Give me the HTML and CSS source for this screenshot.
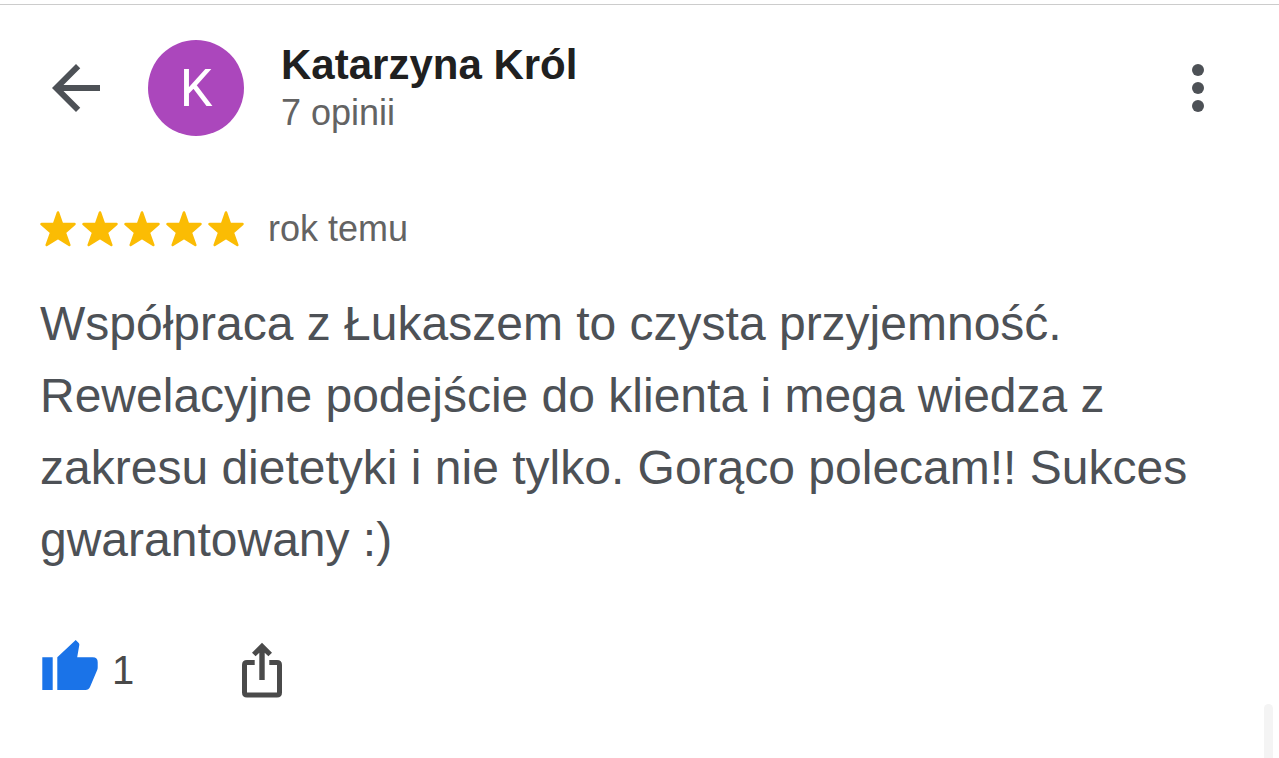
FILE: index.html
```html
<!DOCTYPE html>
<html lang="pl">
<head>
  <meta charset="UTF-8">
  <meta name="viewport" content="width=device-width, initial-scale=1.0">
  <title>Opinia - Katarzyna Król</title>
  <link rel="stylesheet" href="styles.css">
</head>
<body>
  <svg class="sprite" aria-hidden="true">
    <symbol id="star" viewBox="0 0 36 36">
      <path d="M18 1.500 22 13h12.500L24.800 21.500 29.300 34 18 27 6.700 34l4.500-12.500L1.500 13H14z" stroke-width="2.500" stroke-linejoin="round"/>
    </symbol>
  </svg>

  <article class="review">
    <header class="review-header">
      <button class="icon-btn back" type="button" aria-label="Wstecz">
        <svg width="48" height="48" viewBox="4 4 16 16" fill="#4d5156">
          <path d="M20 11H7.830l5.590-5.590L12 4l-8 8 8 8 1.410-1.410L7.830 13H20z"/>
        </svg>
      </button>
      <div class="avatar">K</div>
      <div class="author">
        <h1>Katarzyna Król</h1>
        <p>7 opinii</p>
      </div>
      <button class="icon-btn more" type="button" aria-label="Więcej">
        <svg width="12" height="48" viewBox="0 0 12 48" fill="#4d5156">
          <circle cx="6" cy="6" r="6"/>
          <circle cx="6" cy="24" r="6"/>
          <circle cx="6" cy="42" r="6"/>
        </svg>
      </button>
    </header>

    <div class="rating">
      <div class="stars" role="img" aria-label="5 z 5 gwiazdek">
        <svg><use href="#star"/></svg>
        <svg><use href="#star"/></svg>
        <svg><use href="#star"/></svg>
        <svg><use href="#star"/></svg>
        <svg><use href="#star"/></svg>
      </div>
      <span class="date">rok temu</span>
    </div>

    <p class="review-text">Współpraca z Łukaszem to czysta przyjemność. Rewelacyjne podejście do klienta i mega wiedza z zakresu dietetyki i nie tylko. Gorąco polecam!! Sukces gwarantowany :)</p>

    <footer class="actions">
      <button class="icon-btn like" type="button" aria-label="Lubię to, 1">
        <svg width="56" height="60" viewBox="0 0 56 60" fill="#1a73e8">
          <path d="M0.300 17.300h10.400V50H0.300zM15.300 17.300 33.700 0l3 3q0.800 0.800 0.600 2L35.200 17.300h15.500q5 0 5 5v5q0 1.500-0.500 2.700L48 47q-1.300 3-4.500 3H15.300z"/>
        </svg>
        <span>1</span>
      </button>
      <button class="icon-btn share" type="button" aria-label="Udostępnij">
        <svg width="40" height="60" viewBox="0 0 40 60">
          <path d="M12.700 22.500H5q-2.500 0-2.500 2.500v27.500q0 2.500 2.500 2.500h30q2.500 0 2.500-2.500V25q0-2.500-2.500-2.500h-7.700" fill="none" stroke="#4a4a4a" stroke-width="5"/>
          <path d="M20 2.700l10 10-3.600 3.600-3.700-3.600V40h-5.400V12.700l-3.700 3.600-3.600-3.600z" fill="#4a4a4a"/>
        </svg>
      </button>
    </footer>
  </article>
  <div class="scroll-thumb"></div>
</body>
</html>
```
FILE: styles.css
```css
* {
  box-sizing: border-box;
}

body {
  margin: 0;
  background-color: #fff;
  font-family: "Liberation Sans", Arial, sans-serif;
  color: #4d5156;
}

h1, p {
  margin: 0;
}

.sprite {
  display: none;
}

.review {
  margin-top: 4px;
  padding: 35px 40px 0;
  border-top: 1px solid #ccc;
}

.icon-btn {
  display: flex;
  align-items: center;
  padding: 0;
  border: none;
  background: none;
  font-family: inherit;
  color: inherit;
  cursor: pointer;
}

.icon-btn svg {
  display: block;
}

.review-header {
  display: flex;
  align-items: center;
  padding: 0 35px 0 12px;
}

.avatar {
  width: 96px;
  height: 96px;
  margin: 0 37px 0 48px;
  border-radius: 50%;
  background-color: #ab47bc;
  color: #fff;
  font-family: Roboto, sans-serif;
  font-size: 52px;
  line-height: 98px;
  text-align: center;
}

.author {
  flex: 1;
}

.author h1 {
  font-size: 42px;
  line-height: 50px;
  color: #202020;
}

.author p {
  font-size: 36px;
  line-height: 46px;
  color: #636363;
}

.rating {
  display: flex;
  align-items: center;
  gap: 24px;
  margin-top: 69px;
}

.stars {
  display: flex;
  gap: 6px;
}

.stars svg {
  width: 36px;
  height: 36px;
  fill: #fbbc04;
  stroke: #fbbc04;
}

.date {
  font-size: 36px;
  line-height: 48px;
  color: #636363;
}

.review-text {
  margin-top: 35px;
  font-size: 48px;
  line-height: 72px;
}

.actions {
  display: flex;
  align-items: center;
  gap: 108px;
  margin-top: 64px;
  padding-left: 2px;
}

.like {
  gap: 14px;
  font-size: 40px;
  line-height: 60px;
  color: #4a4a4a;
}

.scroll-thumb {
  position: fixed;
  right: 6px;
  bottom: 0;
  width: 9px;
  height: 54px;
  border-radius: 5px 5px 0 0;
  background-color: #f4f4f4;
}
```
